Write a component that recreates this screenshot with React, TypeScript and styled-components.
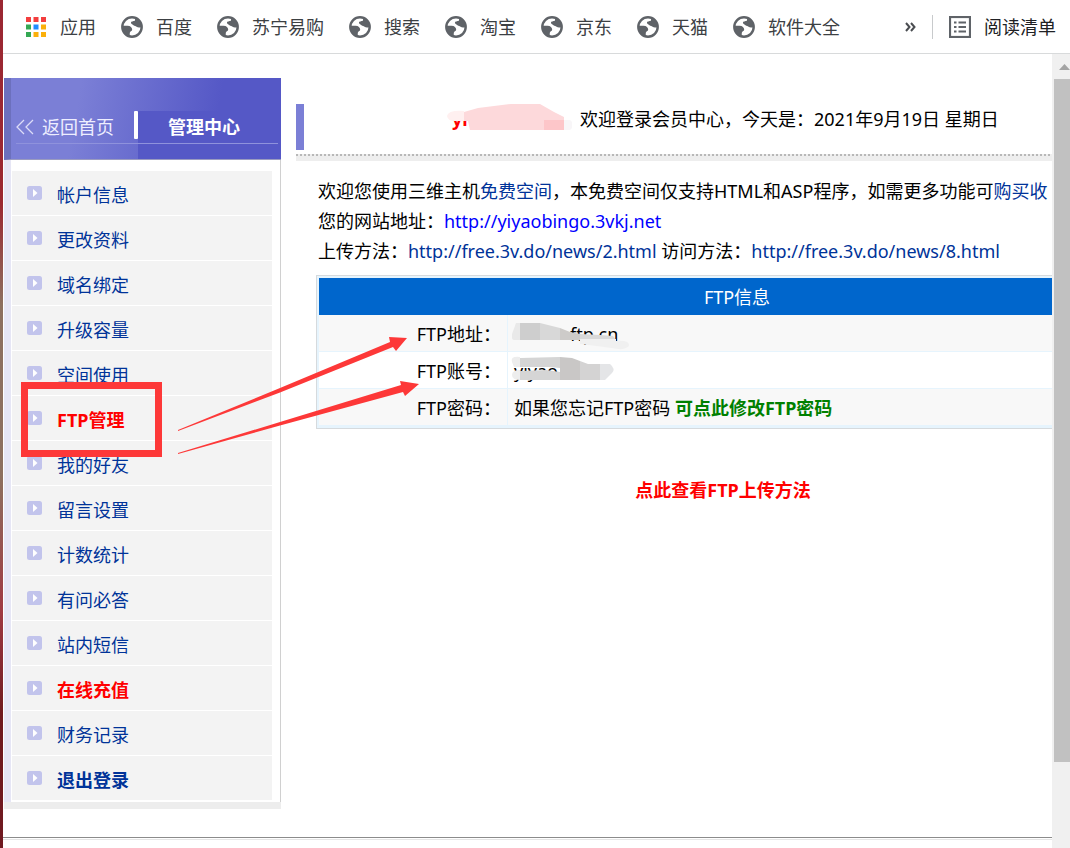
import React from 'react';
import styled, { createGlobalStyle, css } from 'styled-components';

const Global = createGlobalStyle`
  * { box-sizing: border-box; }
  html, body, #root { height: 100%; }
  body {
    margin: 0;
    background: #fff;
    color: #000;
    font: 18px/30px "Noto Sans", "Noto Sans CJK SC", sans-serif;
  }
  a { color: #039; text-decoration: none; }
`;

const Shell = styled.div`
  display: flex;
  flex-direction: column;
  min-height: 100%;
  position: relative;
  border-left: 3px solid;
  border-image: linear-gradient(#9b2832 0%, #9b2832 24%, #8d7060 36%, #8d7060 56%, #a03a44 72%, #701a20 84%, #701a20 100%) 1;
`;

const Bookmarks = styled.nav`
  display: flex;
  align-items: center;
  height: 54px;
  padding: 0 14px 0 23px;
  border-bottom: 1px solid #d8dadb;
  white-space: nowrap;
`;

const BookmarkList = styled.div`
  display: flex;
  flex: 1;
  gap: 25px;
  overflow: hidden;
`;

const Bookmark = styled.a`
  display: flex;
  align-items: center;
  gap: 13px;
  color: #3c4043;
`;

const BarButton = styled.button`
  display: flex;
  align-items: center;
  gap: 13px;
  padding: 0;
  border: 0;
  background: none;
  color: #202124;
  font: inherit;
`;

const BarDivider = styled.span`
  width: 1px;
  height: 24px;
  margin: 0 16px;
  background: #c8cacc;
`;

const Viewport = styled.div`
  display: flex;
  flex: 1;
`;

const Page = styled.div`
  flex: 1;
  min-width: 0;
  overflow: hidden;
  padding-top: 24px;
`;

const Columns = styled.div`
  display: flex;
  align-items: flex-start;
  gap: 15px;
  padding-left: 1px;
`;

const Sidebar = styled.aside`
  flex: none;
  width: 277px;
  border-bottom: 7px solid #ededed;
`;

const SideHeader = styled.header`
  display: flex;
  align-items: flex-end;
  position: relative;
  height: 82px;
  border-left: 7px solid #6c70bd;
  border-bottom: 1px solid #9a9bc0;
  background: linear-gradient(100deg, #7b7fd6 0%, #7b7fd6 25%, #5558c6 75%);
  color: #fff;
  &::after {
    content: '';
    position: absolute;
    left: 5px;
    right: 3px;
    bottom: 15px;
    height: 1px;
    background: #8f92dc;
  }
`;

const HomeLink = styled.a`
  display: flex;
  align-items: center;
  gap: 8px;
  flex: 1;
  height: 48px;
  padding: 0 0 16px 5px;
  color: #eeeeff;
`;

const Divider = styled.span`
  align-self: flex-end;
  width: 4px;
  height: 28px;
  margin-bottom: 20px;
  border-radius: 1px;
  background: #fff;
`;

const Current = styled.strong`
  width: 143px;
  height: 48px;
  padding: 1px 0 0 30px;
  background: #5558c6;
`;

const Menu = styled.ul`
  margin: 0;
  padding: 11px 8px 1px 1px;
  list-style: none;
  border-left: 7px solid #e6e6f5;
  border-right: 1px solid #d0d0d0;
`;

const tones = {
  plain: css`color: #039;`,
  strong: css`color: #039; font-weight: 700;`,
  alert: css`color: #f00; font-weight: 700;`,
};

const MenuLink = styled.a<{ $tone: keyof typeof tones }>`
  display: flex;
  align-items: center;
  gap: 15px;
  height: 45px;
  padding: 4px 0 0 15px;
  border-bottom: 1px solid #fff;
  background: #f3f3f3;
  ${p => tones[p.$tone]}
  svg { margin-top: -5px; }
`;

const Main = styled.main`
  flex: none;
  width: 854px;
  padding-top: 26px;
  white-space: nowrap;
`;

const Greeting = styled.div`
  display: flex;
  gap: 10px;
  height: 46px;
  padding-left: 148px;
  border-left: 8px solid #7b7fd6;
`;

const User = styled.strong`
  position: relative;
  width: 118px;
  color: #f00;
`;

const Rule = styled.div`
  height: 7px;
  margin-top: 4px;
  border-top: 2px dotted #b8b8b8;
  background: #eee;
`;

const Notice = styled.div`
  margin: 15px 0 9px;
  padding-left: 22px;
`;

const Url = styled.a<{ $bright?: boolean }>`
  color: ${p => (p.$bright ? '#00f' : '#039')};
`;

const FtpTable = styled.table`
  width: 842px;
  margin-left: 20px;
  border: 1px solid #d6dadd;
  outline: 2px solid #e6f4fd;
  outline-offset: -3px;
  border-spacing: 0;
  padding: 2px;
`;

const TitleCell = styled.th`
  height: 37px;
  padding: 0;
  background: #06c;
  color: #fff;
  font-weight: 400;
`;

const FtpRow = styled.tr`
  height: 37px;
  &:nth-child(odd) { background: #f8f8f8; }
  th, td {
    padding: 2px 6px 0;
    border-bottom: 1px solid #e6f4fd;
    text-align: left;
    font-weight: 400;
  }
  th {
    width: 189px;
    border-right: 1px solid #e6f4fd;
    text-align: right;
  }
`;

const Masked = styled.span<{ $indent?: number }>`
  display: block;
  position: relative;
  padding-left: ${p => p.$indent ?? 0}px;
`;

const Smudge = styled.svg`
  position: absolute;
  left: -6px;
  top: 0;
`;

const HelpLine = styled.p`
  margin: 46px 0 0;
  text-align: center;
`;

const Em = styled.a<{ $color: string }>`
  color: ${p => p.$color};
  font-weight: 700;
`;

const Footer = styled.div`
  height: 3px;
  margin-top: 28px;
  border-top: 1px solid #8c8c8c;
  border-bottom: 1px solid #e6e6e6;
`;

const ScrollTrack = styled.div`
  flex: none;
  display: flex;
  flex-direction: column;
  width: 18px;
  padding: 10px 0 86px 2px;
  background: #f0f0f0;
  svg { display: block; margin: 0 0 9px 5px; }
`;

const ScrollThumb = styled.div`
  flex: 1;
  background: #c1c1c1;
`;

const HighlightBox = styled.div`
  position: absolute;
  left: 18px;
  top: 382px;
  width: 141px;
  height: 75px;
  border: 7px solid #fd3838;
  pointer-events: none;
`;

const Arrows = styled.svg`
  position: absolute;
  left: 167px;
  top: 325px;
  pointer-events: none;
`;

const Globe = () => (
  <svg width="22" height="22" viewBox="0 0 22 22" aria-hidden="true">
    <circle cx="11" cy="11" r="9.7" fill="#fff" stroke="#5f6368" strokeWidth="2.400" />
    <path fill="#5f6368" d="M10.500 1C13.500 1 14.500 2.500 14 4.200C13.600 5.600 10.500 4.800 10 6.300C9.600 7.600 11 8 11.800 8.800C12.600 9.800 13.800 9.800 15.200 10.600C16.500 11.600 18.500 11.700 20.500 11.500C20.500 6 17 1 10.500 1ZM1.200 9.800H6.500C9.500 9.800 11.200 11.500 11.200 13.800C11.200 15.200 9.500 15.200 9 16.200C8.500 17.200 9 18.500 8.500 20C4 19 1 15 1.200 9.800Z" />
  </svg>
);

const Apps = () => {
  const colors = ['#f33e3e', '#f33e3e', '#f33e3e', '#34a853', '#1e8cff', '#fbb00b', '#34a853', '#fbb00b', '#fbb00b'];
  return (
    <svg width="21" height="20" aria-hidden="true">
      {colors.map((c, i) => (
        <rect key={i} x={(i % 3) * 7.5} y={Math.floor(i / 3) * 7.5} width="5" height="5" fill={c} />
      ))}
    </svg>
  );
};

const ListIcon = () => (
  <svg width="22" height="22" fill="none" stroke="#5f6368" strokeWidth="2" aria-hidden="true">
    <rect x="1" y="1" width="20" height="20" strokeWidth="2.200" />
    <path d="M5 6.500h2.500M9.500 6.500h7.500M5 11h2.500M9.500 11h7.500M5 15.500h2.500M9.500 15.500h7.500" />
  </svg>
);

const Bullet = () => (
  <svg width="15" height="14" aria-hidden="true">
    <rect width="15" height="14" rx="2.500" fill="#c2c4ec" />
    <path d="M6 3l4.500 4L6 11z" fill="#fff" />
  </svg>
);

const bookmarks = ['百度', '苏宁易购', '搜索', '淘宝', '京东', '天猫', '软件大全'];

const menu: { label: string; tone?: keyof typeof tones }[] = [
  { label: '帐户信息' },
  { label: '更改资料' },
  { label: '域名绑定' },
  { label: '升级容量' },
  { label: '空间使用' },
  { label: 'FTP管理', tone: 'alert' },
  { label: '我的好友' },
  { label: '留言设置' },
  { label: '计数统计' },
  { label: '有问必答' },
  { label: '站内短信' },
  { label: '在线充值', tone: 'alert' },
  { label: '财务记录' },
  { label: '退出登录', tone: 'strong' },
];

export default function App() {
  return (
    <Shell>
      <Global />
      <Bookmarks>
        <BookmarkList>
          <Bookmark href="#"><Apps />应用</Bookmark>
          {bookmarks.map(b => (
            <Bookmark key={b} href="#"><Globe />{b}</Bookmark>
          ))}
        </BookmarkList>
        <BarButton aria-label="更多书签">
          <svg width="11" height="10" fill="none" stroke="#4a4d51" strokeWidth="2" aria-hidden="true">
            <path d="M1 1l3.500 4L1 9M6 1l3.500 4L6 9" />
          </svg>
        </BarButton>
        <BarDivider />
        <BarButton><ListIcon />阅读清单</BarButton>
      </Bookmarks>

      <Viewport>
        <Page>
          <Columns>
            <Sidebar>
              <SideHeader>
                <HomeLink href="#">
                  <svg width="18" height="16" fill="none" stroke="#dcdcf8" strokeWidth="1.300" aria-hidden="true">
                    <path d="M8 1L1 8l7 7M17 1l-7 7 7 7" />
                  </svg>
                  返回首页
                </HomeLink>
                <Divider />
                <Current>管理中心</Current>
              </SideHeader>
              <Menu>
                {menu.map(({ label, tone = 'plain' }) => (
                  <li key={label}>
                    <MenuLink href="#" $tone={tone}><Bullet />{label}</MenuLink>
                  </li>
                ))}
              </Menu>
            </Sidebar>

            <Main>
              <Greeting>
                <User>
                  yi
                  <Smudge width="126" height="30" aria-hidden="true">
                    <path d="M18 8L32 4L65 0H94L108 8L118 13V26H24L22 17H18Z" fill="#fdd9db" />
                    <path d="M18 7Q2 6 1 12Q2 17 8 17H18Z" fill="#fff0f0" />
                    <path d="M98 16H118V26H98Z" fill="#fdc6c9" />
                    <path d="M118 16H124Q130 21 124 26H118Z" fill="#f8f6f8" />
                  </Smudge>
                </User>
                <span>欢迎登录会员中心，今天是：2021年9月19日 星期日</span>
              </Greeting>
              <Rule />
              <Notice>
                <div>欢迎您使用三维主机<a href="#">免费空间</a>，本免费空间仅支持HTML和ASP程序，如需更多功能可<a href="#">购买收</a></div>
                <div>您的网站地址：<Url $bright href="#">http://yiyaobingo.3vkj.net</Url></div>
                <div>上传方法：<Url href="#">http://free.3v.do/news/2.html</Url> 访问方法：<Url href="#">http://free.3v.do/news/8.html</Url></div>
              </Notice>
              <FtpTable>
                <thead>
                  <tr><TitleCell colSpan={2}>FTP信息</TitleCell></tr>
                </thead>
                <tbody>
                  <FtpRow>
                    <th scope="row">FTP地址：</th>
                    <td>
                      <Masked $indent={56}>
                        ftp.cn
                        <Smudge width="126" height="34" aria-hidden="true">
                          <path d="M12 4H8L4 15V19Q4 21 7 21H12Z" fill="#e9e9e9" />
                          <path d="M12 4H32V21H12Z" fill="#cecece" />
                          <path d="M32 4L52 9V21H32Z" fill="#d8d8d8" />
                          <path d="M52 9L62 13L72 15V21H52Z" fill="#cdcbc9" />
                          <path d="M72 15L92 16L105 17L108 21V24H72Z" fill="#d9d9d9" />
                          <path d="M72 20H108V22Q122 21 121 27Q116 32 104 29L72 25Z" fill="#f0f0f0" />
                        </Smudge>
                      </Masked>
                    </td>
                  </FtpRow>
                  <FtpRow>
                    <th scope="row">FTP账号：</th>
                    <td>
                      <Masked>
                        yiyao
                        <Smudge width="126" height="34" aria-hidden="true">
                          <path d="M12 1Q2 0 4 6L6 11H12ZM12 14Q4 14 4 19Q4 24 12 24Z" fill="#ededed" />
                          <path d="M12 2L52 1V12L42 11H12ZM12 15L38 14L52 16V24H12Z" fill="#d5d5d5" />
                          <path d="M52 1L64 2L72 5V24H52Z" fill="#c9c7c6" />
                          <path d="M72 5L80 8H92V24H72Z" fill="#d4d3d3" />
                          <path d="M92 8H102Q108 13 104 17L97 24H92Z" fill="#e4e5e7" />
                        </Smudge>
                      </Masked>
                    </td>
                  </FtpRow>
                  <FtpRow>
                    <th scope="row">FTP密码：</th>
                    <td>如果您忘记FTP密码 <Em href="#" $color="#008000">可点此修改FTP密码</Em></td>
                  </FtpRow>
                </tbody>
              </FtpTable>
              <HelpLine><Em href="#" $color="#f00">点此查看FTP上传方法</Em></HelpLine>
            </Main>
          </Columns>
          <Footer />
        </Page>
        <ScrollTrack>
          <svg width="11" height="6" aria-hidden="true"><path d="M0 6L5.500 0l5.500 6z" fill="#a3a3a3" /></svg>
          <ScrollThumb />
        </ScrollTrack>
      </Viewport>

      <HighlightBox />
      <Arrows width="260" height="135" aria-hidden="true">
        <path fill="#fd3838" d="M8 105L110 63L220 17L219 12L237 13L226 26L223 22L110 67.500L8 106Z" />
        <path fill="#fd3838" d="M8 128L110 97L231 60L230 56L249 59L235 71L233 67L110 100.500L8 129Z" />
      </Arrows>
    </Shell>
  );
}
